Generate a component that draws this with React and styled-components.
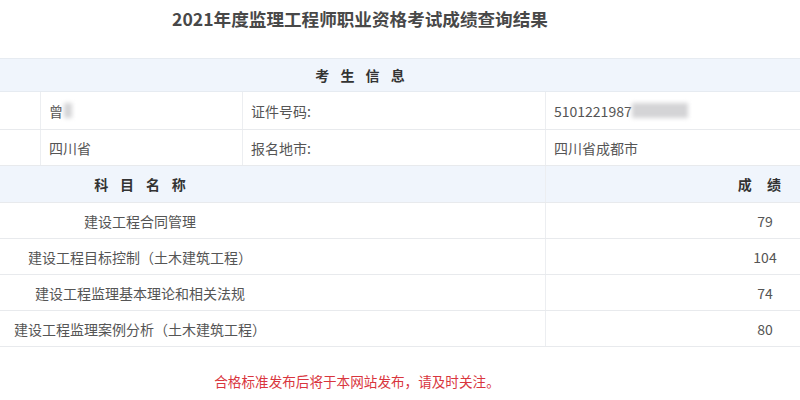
import React from 'react';
import styled, { createGlobalStyle } from 'styled-components';

const Global = createGlobalStyle`
  body {
    margin: 0;
    background: #fff;
    font-family: "Noto Sans CJK SC", "Liberation Sans", sans-serif;
    color: #555;
  }
`;

const Page = styled.div`
  width: 800px;
  height: 400px;
  overflow: hidden;
  background: #fff;
`;

const Title = styled.h1`
  width: 720px;
  margin: 0;
  height: 58px;
  line-height: 38px;
  text-align: center;
  font-size: 17.6px;
  font-weight: bold;
  color: #484848;
`;

const Band = styled.div`
  height: ${p => p.h}px;
  background: #f0f5fc;
  border-top: 1px solid #e6ebf1;
  border-bottom: 1px solid #e6ebf1;
  box-sizing: border-box;
  display: flex;
  align-items: center;
`;

const BandTitle = styled.div`
  width: 720px;
  text-align: center;
  font-size: 14px;
  font-weight: bold;
  color: #333;
  letter-spacing: 0.8em;
  text-indent: 0.8em;
`;

const InfoRow = styled.div`
  display: grid;
  grid-template-columns: 40px 202px 303px 255px;
  height: ${p => p.h}px;
  border-bottom: 1px solid #e8eaed;
  box-sizing: border-box;
`;

const Cell = styled.div`
  display: flex;
  align-items: center;
  padding-left: 8px;
  font-size: 14px;
  color: #555;
  border-left: ${p => (p.first ? 'none' : '1px solid #eceef1')};
`;

const Mask = styled.span`
  display: inline-block;
  width: ${p => p.w}px;
  height: 15px;
  background: #d4d4d6;
  filter: blur(2px);
  margin-left: ${p => p.gap || 0}px;
`;

const ScoreRow = styled.div`
  display: grid;
  grid-template-columns: 545px 255px;
  height: ${p => p.h}px;
  border-bottom: 1px solid #e8eaed;
  box-sizing: border-box;
  background: ${p => (p.head ? '#f0f5fc' : '#fff')};
`;

const SubjectCell = styled.div`
  display: flex;
  align-items: center;
`;

const SubjectText = styled.span`
  width: 280px;
  text-align: center;
  font-size: 14px;
  color: ${p => (p.head ? '#333' : '#555')};
  font-weight: ${p => (p.head ? 'bold' : 'normal')};
  letter-spacing: ${p => (p.head ? '0.85em' : '0')};
  text-indent: ${p => (p.head ? '0.85em' : '0')};
`;

const ScoreCell = styled.div`
  display: flex;
  align-items: center;
  justify-content: flex-end;
  border-left: 1px solid #eceef1;
`;

const ScoreText = styled.span`
  width: 70px;
  text-align: center;
  font-size: 14px;
  color: ${p => (p.head ? '#333' : '#555')};
  font-weight: ${p => (p.head ? 'bold' : 'normal')};
  letter-spacing: ${p => (p.head ? '1.1em' : '0')};
  text-indent: ${p => (p.head ? '0.3em' : '0')};
`;

const Notice = styled.p`
  margin: 0;
  padding-top: 24px;
  width: 714px;
  text-align: center;
  font-size: 13.6px;
  color: #d9363e;
`;

const scores = [
  ['建设工程合同管理', 79],
  ['建设工程目标控制（土木建筑工程）', 104],
  ['建设工程监理基本理论和相关法规', 74],
  ['建设工程监理案例分析（土木建筑工程）', 80],
];

export default function App() {
  return (
    <Page>
      <Global />
      <Title>2021年度监理工程师职业资格考试成绩查询结果</Title>
      <Band h={34}>
        <BandTitle>考生信息</BandTitle>
      </Band>
      <InfoRow h={38}>
        <Cell first />
        <Cell>曾<Mask w={8} gap={1} /></Cell>
        <Cell>证件号码:</Cell>
        <Cell>5101221987<Mask w={56} /></Cell>
      </InfoRow>
      <InfoRow h={36}>
        <Cell first />
        <Cell>四川省</Cell>
        <Cell>报名地市:</Cell>
        <Cell>四川省成都市</Cell>
      </InfoRow>
      <ScoreRow h={37} head>
        <SubjectCell>
          <SubjectText head>科目名称</SubjectText>
        </SubjectCell>
        <ScoreCell>
          <ScoreText head>成绩</ScoreText>
        </ScoreCell>
      </ScoreRow>
      {scores.map(([name, score]) => (
        <ScoreRow h={36} key={name}>
          <SubjectCell>
            <SubjectText>{name}</SubjectText>
          </SubjectCell>
          <ScoreCell>
            <ScoreText>{score}</ScoreText>
          </ScoreCell>
        </ScoreRow>
      ))}
      <Notice>合格标准发布后将于本网站发布，请及时关注。</Notice>
    </Page>
  );
}
